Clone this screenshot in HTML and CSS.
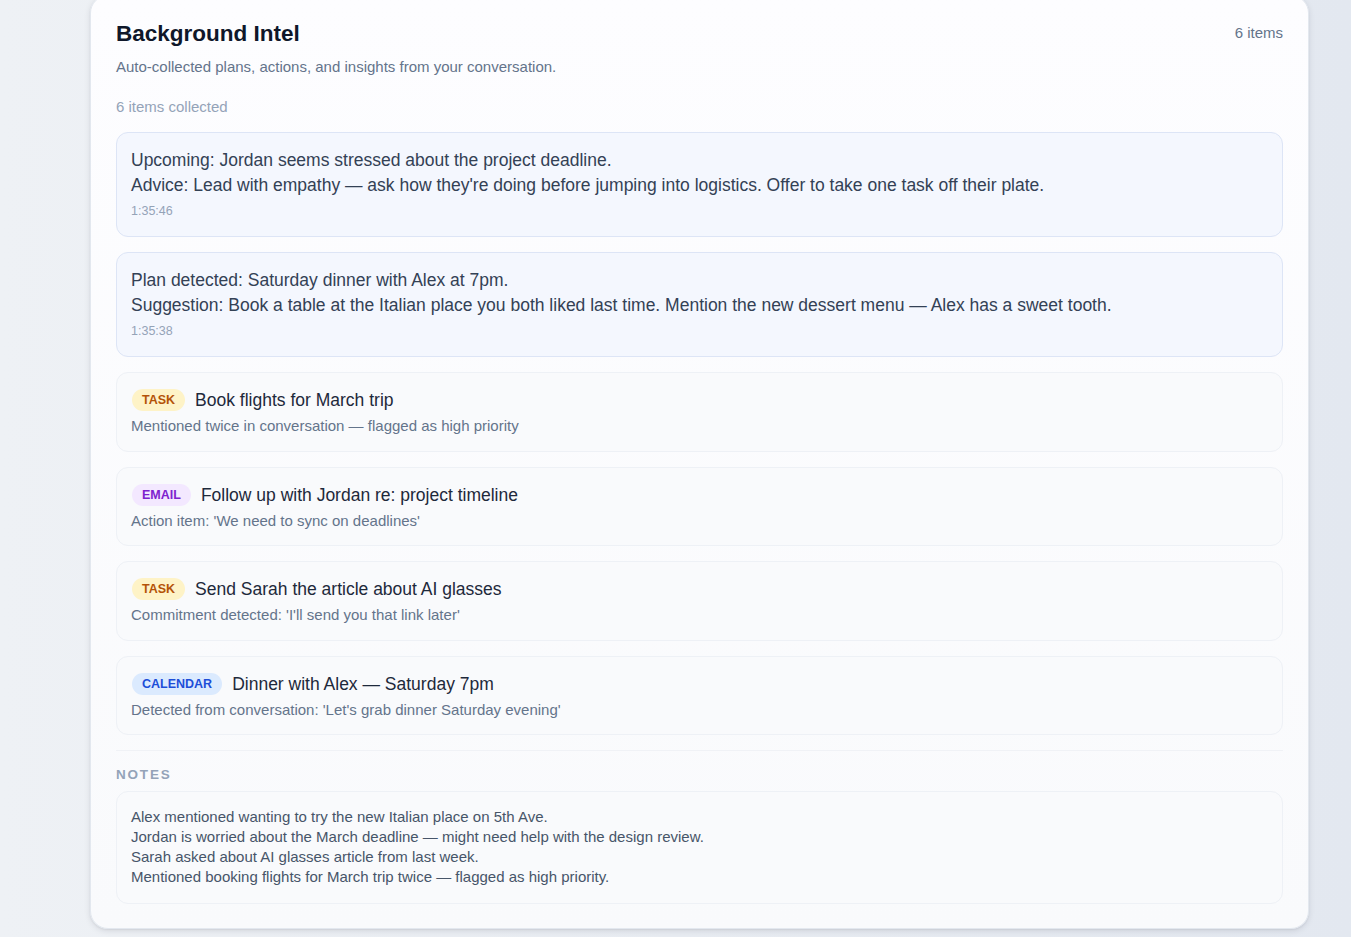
FILE: index.html
```html
<!DOCTYPE html>
<html lang="en">
<head>
<meta charset="utf-8">
<title>Background Intel</title>
<link rel="stylesheet" href="styles.css">
</head>
<body>
<main class="card">
  <header class="card-head">
    <div class="head-text">
      <h1 class="title">Background Intel</h1>
      <p class="subtitle">Auto-collected plans, actions, and insights from your conversation.</p>
    </div>
    <span class="count">6 items</span>
  </header>
  <p class="collected">6 items collected</p>

  <ul class="list">
    <li class="item insight">
      <p class="insight-text">Upcoming: Jordan seems stressed about the project deadline.<br>Advice: Lead with empathy — ask how they're doing before jumping into logistics. Offer to take one task off their plate.</p>
      <p class="time">1:35:46</p>
    </li>
    <li class="item insight">
      <p class="insight-text">Plan detected: Saturday dinner with Alex at 7pm.<br>Suggestion: Book a table at the Italian place you both liked last time. Mention the new dessert menu — Alex has a sweet tooth.</p>
      <p class="time">1:35:38</p>
    </li>
    <li class="item action">
      <div class="row"><span class="tag tag-task">TASK</span><span class="action-title">Book flights for March trip</span></div>
      <p class="action-sub">Mentioned twice in conversation — flagged as high priority</p>
    </li>
    <li class="item action">
      <div class="row"><span class="tag tag-email">EMAIL</span><span class="action-title">Follow up with Jordan re: project timeline</span></div>
      <p class="action-sub">Action item: 'We need to sync on deadlines'</p>
    </li>
    <li class="item action">
      <div class="row"><span class="tag tag-task">TASK</span><span class="action-title">Send Sarah the article about AI glasses</span></div>
      <p class="action-sub">Commitment detected: 'I'll send you that link later'</p>
    </li>
    <li class="item action">
      <div class="row"><span class="tag tag-cal">CALENDAR</span><span class="action-title">Dinner with Alex — Saturday 7pm</span></div>
      <p class="action-sub">Detected from conversation: 'Let's grab dinner Saturday evening'</p>
    </li>
  </ul>

  <section class="notes">
    <h2 class="notes-label">NOTES</h2>
    <div class="notes-box">
      <p>Alex mentioned wanting to try the new Italian place on 5th Ave.</p>
      <p>Jordan is worried about the March deadline — might need help with the design review.</p>
      <p>Sarah asked about AI glasses article from last week.</p>
      <p>Mentioned booking flights for March trip twice — flagged as high priority.</p>
    </div>
  </section>
</main>
</body>
</html>
```

FILE: styles.css
```css
* { box-sizing: border-box; }

html, body { height: 100%; }

body {
  margin: 0;
  font-family: "Liberation Sans", Arial, sans-serif;
  background: linear-gradient(90deg, #eef1f5 0%, #e8ecf2 50%, #e3e8f0 100%);
  overflow: hidden;
}

p, h1, h2, ul { margin: 0; padding: 0; }

.card {
  width: 1219px;
  margin: -5px 0 0 90px;
  background: linear-gradient(180deg, #fdfdff 0%, #f9fafc 100%);
  border: 1px solid #e3e8ef;
  border-radius: 18px;
  padding: 24px 25px 24px 25px;
  box-shadow: 0 2px 6px rgba(15, 23, 42, 0.10), 0 1px 2px rgba(15, 23, 42, 0.06);
}

.card-head {
  display: flex;
  justify-content: space-between;
  align-items: flex-start;
}

.title {
  font-size: 22.5px;
  line-height: 28px;
  font-weight: 700;
  color: #0f172a;
}

.subtitle {
  margin-top: 9px;
  font-size: 15px;
  line-height: 20px;
  color: #64748b;
}

.count {
  font-size: 15px;
  line-height: 20px;
  margin-top: 3px;
  color: #64748b;
}

.collected {
  margin-top: 20px;
  font-size: 15px;
  line-height: 20px;
  color: #94a3b8;
}

.list {
  list-style: none;
  margin-top: 15px;
  display: flex;
  flex-direction: column;
  gap: 15px;
}

.item {
  border-radius: 12px;
  padding: 14px 14px 16px 14px;
}

.insight {
  background: #f4f7fe;
  border: 1px solid #dde5f6;
  padding-top: 15px;
  padding-bottom: 16px;
}

.insight-text {
  font-size: 17.5px;
  line-height: 25px;
  color: #334155;
}

.time {
  margin-top: 4px;
  font-size: 12.5px;
  line-height: 18px;
  color: #94a3b8;
}

.action {
  background: #f9fafc;
  border: 1px solid #eef1f6;
  padding-top: 15px;
  padding-bottom: 14.5px;
}

.row {
  display: flex;
  align-items: center;
  gap: 10px;
  height: 24px;
  padding-left: 1px;
}

.tag {
  display: inline-flex;
  align-items: center;
  height: 22px;
  padding: 0 10px;
  border-radius: 11px;
  font-size: 12.5px;
  font-weight: 700;
}

.tag-task { background: #fef3c7; color: #b45309; }
.tag-email { background: #f3e8ff; color: #7e22ce; }
.tag-cal { background: #dbeafe; color: #1d4ed8; }

.action-title {
  font-size: 17.5px;
  line-height: 24px;
  color: #1e293b;
}

.action-sub {
  margin-top: 4px;
  font-size: 15px;
  line-height: 20px;
  color: #64748b;
}

.notes {
  margin-top: 15px;
  border-top: 1px solid #f0f2f6;
}

.notes-label {
  margin-top: 15px;
  font-size: 13.5px;
  line-height: 18px;
  font-weight: 700;
  letter-spacing: 1.8px;
  color: #94a3b8;
}

.notes-box {
  margin-top: 7px;
  background: #f9fafc;
  border: 1px solid #eef1f6;
  border-radius: 12px;
  padding: 15px 14px 16px 14px;
}

.notes-box p {
  font-size: 15px;
  line-height: 20px;
  color: #475569;
}
```
